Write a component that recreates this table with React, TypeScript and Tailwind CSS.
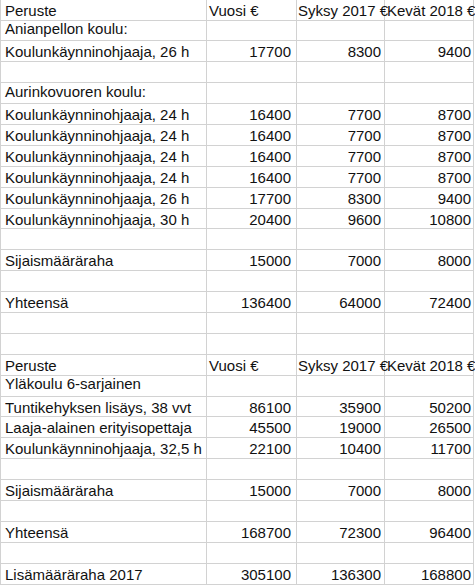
import React from 'react';

type Row = [string, string?, string?, string?];

const rows: Row[] = [
  ['Peruste', 'Vuosi €', 'Syksy 2017 €', 'Kevät 2018 €'],
  ['Anianpellon koulu:'],
  ['Koulunkäynninohjaaja, 26 h', '17700', '8300', '9400'],
  [''],
  ['Aurinkovuoren koulu:'],
  ['Koulunkäynninohjaaja, 24 h', '16400', '7700', '8700'],
  ['Koulunkäynninohjaaja, 24 h', '16400', '7700', '8700'],
  ['Koulunkäynninohjaaja, 24 h', '16400', '7700', '8700'],
  ['Koulunkäynninohjaaja, 24 h', '16400', '7700', '8700'],
  ['Koulunkäynninohjaaja, 26 h', '17700', '8300', '9400'],
  ['Koulunkäynninohjaaja, 30 h', '20400', '9600', '10800'],
  [''],
  ['Sijaismääräraha', '15000', '7000', '8000'],
  [''],
  ['Yhteensä', '136400', '64000', '72400'],
  [''],
  [''],
  ['Peruste', 'Vuosi €', 'Syksy 2017 €', 'Kevät 2018 €'],
  ['Yläkoulu 6-sarjainen'],
  ['Tuntikehyksen lisäys, 38 vvt', '86100', '35900', '50200'],
  ['Laaja-alainen erityisopettaja', '45500', '19000', '26500'],
  ['Koulunkäynninohjaaja, 32,5 h', '22100', '10400', '11700'],
  [''],
  ['Sijaismääräraha', '15000', '7000', '8000'],
  [''],
  ['Yhteensä', '168700', '72300', '96400'],
  [''],
  ['Lisämääräraha 2017', '305100', '136300', '168800'],
];

export default function App() {
  return (
    <div className="w-[475px] h-[585px] bg-white overflow-hidden text-[15px] text-[#111] font-['Liberation_Sans',Arial,sans-serif]">
      <div className="w-[474px] border-l border-[#d2d2d2]">
        {rows.map((row, i) => {
          const header = row[1] !== undefined && isNaN(Number(row[1]));
          return (
            <div
              key={i}
              className={`grid grid-cols-[206px_90px_88px_89px] border-b border-[#d2d2d2] ${i === 0 ? 'h-[20.5px]' : 'h-[20.9px]'}`}
            >
              <div className="flex items-end pl-[4px] border-r border-[#d2d2d2] whitespace-nowrap overflow-hidden">
                {row[0]}
              </div>
              <div className={`flex items-end border-r border-[#d2d2d2] whitespace-nowrap ${header ? 'pl-[2px]' : 'justify-end pr-[5px]'}`}>
                {row[1]}
              </div>
              <div className={`flex items-end border-r border-[#d2d2d2] whitespace-nowrap ${header ? 'pl-[1px]' : 'justify-end pr-[3px]'}`}>
                {row[2]}
              </div>
              <div className={`flex items-end border-r border-[#d2d2d2] whitespace-nowrap ${header ? 'pl-[2px]' : 'justify-end pr-[2px]'}`}>
                {row[3]}
              </div>
            </div>
          );
        })}
      </div>
    </div>
  );
}
